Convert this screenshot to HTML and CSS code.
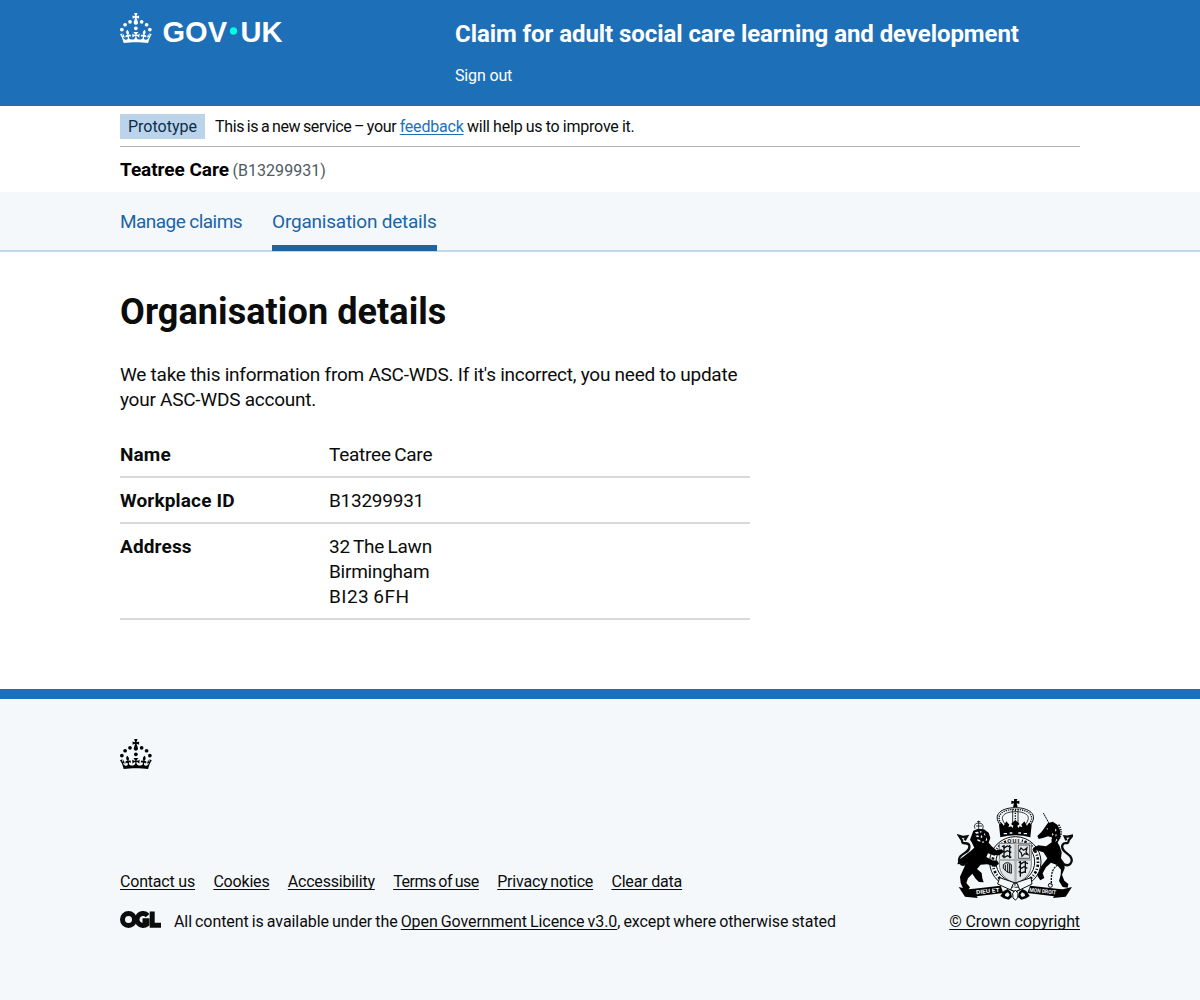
FILE: index.html
```
<!DOCTYPE html>
<html lang="en">
<head>
<meta charset="utf-8">
<title>Organisation details – Claim for adult social care learning and development</title>
<link rel="stylesheet" href="styles.css">
</head>
<body>
<svg width="0" height="0" class="defs" aria-hidden="true">
  <symbol id="crown" viewBox="0 0 64 60">
    <circle cx="20" cy="17.6" r="3.7"/><circle cx="10.2" cy="23.5" r="3.7"/><circle cx="3.7" cy="33.2" r="3.7"/><circle cx="31.7" cy="30.6" r="3.7"/><circle cx="43.3" cy="17.6" r="3.7"/><circle cx="53.2" cy="23.5" r="3.7"/><circle cx="59.7" cy="33.2" r="3.7"/>
    <path d="M33.1,9.8c.2-.1.3-.3.5-.5l4.6,2.4v-6.8l-4.6,1.5c-.1-.2-.3-.3-.5-.5l1.9-5.9h-6.7l1.9,5.9c-.2.1-.3.3-.5.5l-4.6-1.5v6.8l4.6-2.4c.1.2.3.3.5.5l-2.6,8c-.9,2.8,1.2,5.7,4.1,5.7h0c3,0,5.1-2.9,4.1-5.7l-2.6-8ZM37,37.9s-3.4,3.8-4.1,6.1c2.2,0,4.2-.5,6.4-2.8l-.7,8.5c-2-2.8-4.4-4.1-5.7-3.8.1,3.1.5,6.7,5.8,7.2,3.7.3,6.7-1.5,7-3.8.4-2.6-2-4.3-3.7-1.6-1.4-4.5,2.4-6.1,4.9-3.2-1.9-4.5-1.8-7.7,2.4-10.9,3,4,2.6,7.3-1.2,11.1,2.4-1.3,6.2,0,4,4.6-1.2-2.8-3.7-2.2-4.2.2-.3,1.7.7,3.7,3,4.2,1.9.3,4.7-.9,7-5.9-1.3,0-2.4.7-3.9,1.7l2.4-8c.6,2.3,1.4,3.7,2.2,4.5.6-1.6.5-2.8,0-5.3l5,1.8c-2.6,3.6-5.2,8.7-7.3,17.5-7.4-1.1-15.7-1.7-24.5-1.7h0c-8.8,0-17.1.6-24.5,1.7-2.1-8.9-4.7-13.9-7.3-17.5l5-1.8c-.5,2.5-.6,3.7,0,5.3.8-.8,1.6-2.3,2.2-4.5l2.4,8c-1.5-1-2.6-1.7-3.9-1.7,2.3,5,5.2,6.2,7,5.9,2.3-.4,3.3-2.4,3-4.2-.5-2.4-3-3.1-4.2-.2-2.2-4.6,1.6-6,4-4.6-3.7-3.7-4.2-7.1-1.2-11.1,4.2,3.2,4.3,6.4,2.4,10.9,2.5-2.8,6.3-1.3,4.9,3.2-1.8-2.7-4.1-1-3.7,1.6.3,2.3,3.3,4.1,7,3.8,5.4-.5,5.7-4.2,5.8-7.2-1.3-.2-3.7,1-5.7,3.8l-.7-8.5c2.2,2.3,4.2,2.7,6.4,2.8-.7-2.3-4.1-6.1-4.1-6.1h10.6Z"/>
  </symbol>
</svg>

<header class="header">
  <div class="container header-inner">
    <svg class="logo" viewBox="0 0 324 60" role="img" aria-label="GOV.UK">
      <use href="#crown" width="64" height="60"/>
      <text class="wordmark" x="85" y="57" textLength="129" lengthAdjust="spacingAndGlyphs">GOV</text>
      <circle class="dot" cx="227" cy="36" r="7.3"/>
      <text class="wordmark" x="241" y="57" textLength="84" lengthAdjust="spacingAndGlyphs">UK</text>
    </svg>
    <div class="service">
      <a class="service-name" href="#">Claim for adult social care learning and development</a>
      <a class="sign-out" href="#">Sign out</a>
    </div>
  </div>
</header>

<div class="container">
  <div class="phase">
    <strong class="tag">Prototype</strong>
    <span class="phase-text"><span class="phase-lead">This is a new service – your</span> <a href="#">feedback</a> will help us to improve it.</span>
  </div>
  <div class="org"><strong class="org-name">Teatree Care</strong> <span class="org-id">(B13299931)</span></div>
</div>

<nav class="nav">
  <div class="container nav-list">
    <a class="nav-link" href="#">Manage claims</a>
    <a class="nav-link nav-link-active" href="#">Organisation details</a>
  </div>
</nav>

<main class="container main">
  <h1>Organisation details</h1>
  <p class="intro">We take this information from ASC-WDS. If it's incorrect, you need to update your ASC-WDS account.</p>
  <dl class="summary">
    <div class="row"><dt>Name</dt><dd>Teatree Care</dd></div>
    <div class="row"><dt>Workplace ID</dt><dd>B13299931</dd></div>
    <div class="row"><dt>Address</dt><dd>32 The Lawn<br>Birmingham<br><span class="postcode">BI23 6FH</span></dd></div>
  </dl>
</main>

<footer class="footer">
  <div class="container">
    <svg class="footer-crown" viewBox="0 0 64 60"><use href="#crown" width="64" height="60"/></svg>
    <div class="footer-meta">
      <div>
        <div class="footer-links">
          <a href="#">Contact us</a><a href="#">Cookies</a><a href="#">Accessibility</a><a class="terms" href="#">Terms of use</a><a class="privacy" href="#">Privacy notice</a><a href="#">Clear data</a>
        </div>
        <div class="licence">
          <svg class="ogl" viewBox="0 0 41 17">
            <g fill="none" stroke="currentColor" stroke-width="5">
              <circle cx="8.5" cy="8.5" r="6"/>
              <path d="M27.6 4.6A6 6 0 1 0 27 13V9.800H22.500"/>
              <path d="M32.200 0.500V14.300H41"/>
            </g>
          </svg>
          <span class="licence-text">All content is available under the <a href="#">Open Government Licence v3.0</a>, except where otherwise stated</span>
        </div>
      </div>
      <div class="copyright">
        <svg class="arms" viewBox="36 27 348 306">
          <!-- crown -->
          <path d="M207 27h10l-2 7 8-2v10l-8-2 3 12h-14l3-12-8 2v-10l8 2z"/>
          <g class="ln">
            <path d="M168 108C138 72 172 53 211 53S284 72 254 108" stroke-width="3"/>
            <path d="M172 106C146 74 176 58 211 58S276 74 250 106" stroke-width="4" stroke-dasharray="4 3"/>
            <path d="M181 103C158 76 184 65 211 65S264 76 241 103" stroke-width="2.500"/>
            <path d="M203 58v44M219 58v44" stroke-width="2.500"/>
            <path d="M211 60v40" stroke-width="4" stroke-dasharray="4 4"/>
          </g>
          <path d="M162 104l8-6 6 9 8-13 9 10-3 8 9-3 3 6 3-8-7-5 13-12 13 12-7 5 3 8 3-6 9 3-3-8 9-10 8 13 6-9 8 6-4 38c-30-8-60-8-90 0z"/>
          <path class="wh" d="M176 129h10v4h-10zM194 127h8v4h-8zM220 127h8v4h-8zM236 129h10v4h-10z"/>
          <!-- garter -->
          <ellipse class="ring" cx="211" cy="216" rx="77" ry="76"/>
          <ellipse class="ring-mark" cx="211" cy="216" rx="68" ry="67"/>
          <ellipse class="ring" cx="211" cy="216" rx="58" ry="59"/>
          <text class="motto" x="187" y="159">QUI</text>
          <!-- shield -->
          <path class="shield" d="M163 160h96v62c0 30-20 48-48 58-28-10-48-28-48-58z"/>
          <g class="ln">
            <path d="M171 168l8 5 8-5 12 5M171 182l8 5 8-5 12 5M171 197l8 5 8-5 12 5M177 165v40M194 165v40" stroke-width="4"/>
            <path d="M220 165h34v40h-34z" stroke-width="2"/>
            <path d="M228 174l8 7 10-8-3 13 6 8-10-3-8 8-2-10-6-6z" stroke-width="3.500"/>
            <path d="M175 224q12-12 24 0v26q-14-2-24-15zM181 224v18M188 221v26M194 222v26" stroke-width="3"/>
            <path d="M221 216l8 5 8-5 12 5M221 230l8 5 8-5 10 5M221 244l8 5 12-4M226 213v47M241 213v36" stroke-width="4"/>
          </g>
          <path class="grey" d="M208 160h7v120h-7zM163 207h96v6h-96z"/>
          <!-- lion -->
          <path class="ln" d="M90 116q-6-16 11-17 18 1 12 18M101 92v24M96 95h10M93 108h18" stroke-width="2.500"/>
          <path d="M85 122l14-6 18 2 14 10 5 16-5 14 9 11 14 12 16-3 5 9-12 9-20-1-14-5-5 11 18 10 15 1 5 9-12 10-10-5-14-3-19 1-11 13 14 12 2 16 4 12-14-1-10-10-10-15-13 14-5 14 11 13-6 8-14-3-8-18-2-19 8-18 8-17-10-4-14 2 4-13 14-10 21-16 12-11-8-16-5-8z"/>
          <path class="wh" d="M90 126l9-1 3 5-9 1zM104 123l7 2-4 4zM92 137l7-1 4 4-7 2zM108 134l5 7-6 4zM96 148l9 2 2 5-9-2zM118 128l4 9-5-3zM124 142l3 9-5 2zM113 152l5 5-6 2z"/>
          <path class="tail" d="M70 218C46 235 35 211 47 198C58 187 76 184 73 167C68 151 51 169 51 151L42 137L56 141L66 139L59 151"/>
          <!-- unicorn -->
          <path class="ln" d="M295 69l20 36" stroke-width="3" stroke-dasharray="5 1"/>
          <path d="M308 100l15-5 14 9 8 16 1 20-8 18 6 11 6 18-2 18 10 14 1 16-8 19 7 18 12 10-2 11-15-2-11-18 5-19 1-15-12-14-18-7-15 14-10 18 5 14-12 7-9-13 12-30 18-23-12-18-20-6-12 5 2-13 15-7 23 3 17-12-1-15-10-3-13 4-15 4-4-9 13-13z"/>
          <path class="ln" d="M341 104q15 24-1 47" stroke-width="5" stroke-dasharray="4 3"/>
          <path class="wh" d="M304 116l5-1-1 4zM287 153q19 2 31-13l3 5q-13 16-32 14zM330 116l5 4-4 5zM332 132l4 3-5 5zM322 128l4 6-5 3zM334 146l3 4-6 6z"/>
          <path class="tail" d="M350 219C375 237 386 214 376 199C366 187 348 183 352 166C357 152 371 168 371 151L382 137L367 140L359 139L364 151"/>
          <path class="ln" d="M344 190q5 26-10 38t-15 38v18" stroke-width="4" stroke-dasharray="6 3"/>
          <circle class="ln" cx="316" cy="286" r="6" stroke-width="3"/>
          <!-- garter buckle and roses -->
          <path class="ring" d="M164 263l53 18 7 18-13 7-53-24zM258 263l-53 18-8 18 14 7 50-24z"/>
          <path d="M176 303l12-6 10 9 3 15-10 8-15-4-10-7zM244 303l-12-6-10 9-3 15 10 8 15-4 10-7z"/>
          <path class="wh" d="M181 311l8-4 5 7-5 7-9-3zM239 311l-8-4-5 7 5 7 9-3zM204 290l8 4-7 3z"/>
          <path class="ring" d="M203 310l8-10 8 10-1 14-7 6-7-6z"/>
          <!-- motto ribbon -->
          <path d="M41 291l28 7 18-2 80-9 8 22-80 10 3 5-38-4zM381 291l-28 7-18-2-80-9-8 22 80 10-3 5 38-4z"/>
          <text class="ribbon" transform="rotate(-6 130 305)" x="93" y="309" textLength="71" lengthAdjust="spacingAndGlyphs">DIEU ET</text>
          <text class="ribbon" transform="rotate(6 290 305)" x="253" y="309" textLength="80" lengthAdjust="spacingAndGlyphs">MON DROIT</text>
        </svg>
        <a href="#">© Crown copyright</a>
      </div>
    </div>
  </div>
</footer>
</body>
</html>
```
FILE: styles.css
```
* { box-sizing: border-box; }
body { margin: 0; background: #fff; color: #0b0c0c; font: 19px/25px Roboto, "Liberation Sans", sans-serif; letter-spacing: -0.25px; }
a { color: inherit; text-decoration: none; }
.defs { display: block; }
.container { width: 960px; margin: 0 auto; }

.header { height: 106px; background: #1d70b8; color: #fff; }
.header-inner { display: flex; }
.logo { width: 162px; height: 30px; margin: 13px 173px 0 0; overflow: visible; fill: #fff; }
.wordmark { font: 700 60px "Liberation Sans", sans-serif; letter-spacing: 0; }
.dot { fill: #00ffe0; }
.service { display: flex; flex-direction: column; align-items: flex-start; padding-top: 19px; }
.service-name { font-size: 24px; line-height: 30px; font-weight: 700; letter-spacing: -0.07px; }
.sign-out { margin-top: 17px; font-size: 16px; line-height: 20px; letter-spacing: -0.15px; }

.phase { display: flex; gap: 10px; height: 41px; padding-top: 8px; border-bottom: 1px solid #b1b4b6; font-size: 16px; line-height: 25px; letter-spacing: -0.2px; }
.tag { height: 25px; padding: 0 8px; background: #bbd4ea; color: #0c2d4a; font-weight: 400; letter-spacing: 0; }
.phase-text { word-spacing: -0.5px; }
.phase-lead { letter-spacing: -0.33px; word-spacing: -1px; }
.phase-text a { color: #1d70b8; text-decoration: underline 1px; text-underline-offset: 2px; }
.org { height: 45px; padding-top: 10px; white-space: nowrap; }
.org-name { color: #000; letter-spacing: -0.04px; }
.org-id { margin-left: -1px; font-size: 16px; color: #505a5f; letter-spacing: 0.05px; }

.nav { height: 60px; background: #f4f8fb; border-bottom: 2px solid #bfd7ea; }
.nav-list { display: flex; gap: 30px; }
.nav-link { height: 59px; padding-top: 17px; color: #1a65a6; }
.nav-link:first-child { letter-spacing: -0.55px; }
.nav-link-active { border-bottom: 6px solid #1a65a6; letter-spacing: -0.22px; }

.main { height: 437px; padding-top: 40px; }
h1 { margin: 0; font-size: 36px; line-height: 40px; letter-spacing: 0.08px; }
.intro { width: 630px; margin: 30px 0; }
.summary { width: 630px; margin: 0; }
.row { display: flex; padding-bottom: 9px; margin-bottom: 10px; border-bottom: 2px solid #d8d9da; }
dt { width: 209px; font-weight: 700; letter-spacing: 0.15px; }
dd { margin: 0; word-spacing: -1px; }
.postcode { letter-spacing: 0.45px; }

.footer { height: 311px; padding-top: 40px; border-top: 10px solid #1d70b8; background: #f4f8fb; font-size: 16px; line-height: 20px; letter-spacing: -0.19px; }
.footer a { text-decoration: underline 1px; text-underline-offset: 2px; text-decoration-skip-ink: none; }
.footer-crown { display: block; width: 32px; height: 30px; }
.footer-meta { display: flex; justify-content: space-between; align-items: flex-end; margin-top: 30px; }
.footer-links { display: flex; gap: 18.3px; margin-bottom: 20px; }
.footer-links .terms { word-spacing: -1px; letter-spacing: -0.45px; }
.footer-links .privacy { word-spacing: -1px; }
.licence { display: flex; align-items: flex-start; }
.licence-text { word-spacing: -0.85px; letter-spacing: -0.07px; }
.ogl { width: 41px; height: 17px; margin: -1px 13px 0 0; }
.copyright { display: flex; flex-direction: column; align-items: flex-end; letter-spacing: -0.1px; }
.arms { width: 116px; height: 102px; margin: 0 7px 11px 0; }
.arms .ln { fill: none; stroke: #0b0c0c; }
.arms .tail { fill: none; stroke: #0b0c0c; stroke-width: 7; }
.arms .wh { fill: #f4f8fb; }
.arms .grey { fill: #aeb1b3; }
.arms .ring { fill: #f4f8fb; stroke: #0b0c0c; stroke-width: 3; }
.arms .ring-mark { fill: none; stroke: #0b0c0c; stroke-width: 8; stroke-dasharray: 3 5 7 6; }
.arms .shield { fill: #e2e5e7; stroke: #777b7e; stroke-width: 3; }
.motto { font: 700 18px Roboto, sans-serif; letter-spacing: 3px; paint-order: stroke; stroke: #f4f8fb; stroke-width: 6px; }
.ribbon { font: 700 17px Roboto, sans-serif; letter-spacing: 0; fill: #f4f8fb; }
```
